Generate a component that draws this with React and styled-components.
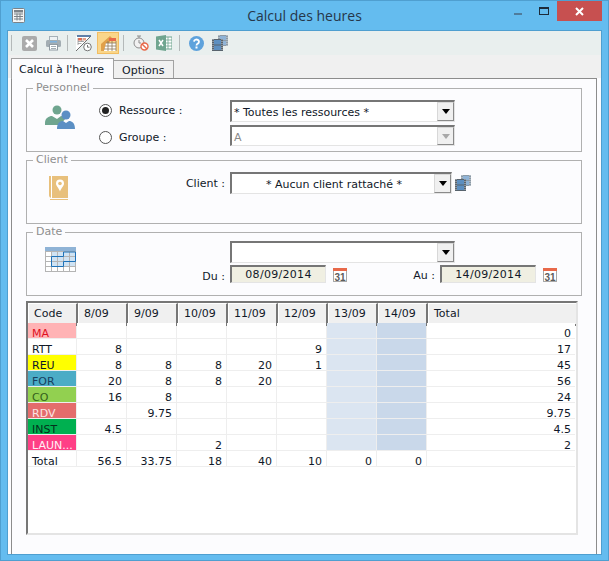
import React from "react";
import styled, { createGlobalStyle } from "styled-components";

const GlobalStyle = createGlobalStyle`
  html, body {
    margin: 0;
    padding: 0;
    background: #64bcef;
  }
  * {
    box-sizing: border-box;
  }
`;

const Frame = styled.div`
  width: 609px;
  height: 561px;
  display: flex;
  flex-direction: column;
  background: #64bcef;
  border: 1px solid #4f9fd0;
  font-family: "DejaVu Sans", sans-serif;
  font-size: 11px;
  color: #101828;
  overflow: hidden;
`;

const TitleBar = styled.div`
  height: 29px;
  flex: none;
  display: grid;
  grid-template-columns: 1fr auto 1fr;
  align-items: start;
`;

const AppIcon = styled.svg`
  display: block;
  margin: 7px 0 0 11px;
`;

const Title = styled.div`
  font-family: "Open Sans", sans-serif;
  font-size: 14px;
  line-height: 30px;
  color: #26374a;
`;

const WindowButtons = styled.div`
  display: flex;
  justify-content: flex-end;
  margin-right: 6px;
`;

const WindowButton = styled.div`
  width: ${(p) => p.$w}px;
  height: 20px;
  display: flex;
  align-items: center;
  justify-content: center;
  background: ${(p) => (p.$close ? "#c75050" : "transparent")};
`;

const ClientArea = styled.div`
  flex: 1;
  display: flex;
  flex-direction: column;
  margin: 0 6px 5px 6px;
  background: #fcfcfe;
  border: 1px solid #4f9fd0;
`;

const Toolbar = styled.div`
  height: 24px;
  flex: none;
  display: flex;
  align-items: center;
  padding-left: 3px;
  background: #e9efee;
`;

const Separator = styled.div`
  width: 1px;
  height: 16px;
  flex: none;
  background: #b4b9b9;
  margin: 0 ${(p) => p.$right ?? 9}px 0 ${(p) => p.$left ?? 8}px;
`;

const ToolButton = styled.div`
  width: ${(p) => p.$w ?? 16}px;
  height: 22px;
  margin-right: ${(p) => p.$gap ?? 0}px;
  flex: none;
  display: flex;
  align-items: center;
  justify-content: center;
  ${(p) => p.$active && "background: #fad68a; border: 1px solid #f2bd62;"}
`;

const TabStrip = styled.div`
  height: 23px;
  flex: none;
  display: flex;
  align-items: flex-end;
  padding-left: 3px;
  background: #f0f0f0;
`;

const Tab = styled.div`
  height: ${(p) => (p.$active ? 21 : 18)}px;
  width: ${(p) => (p.$active ? 103 : 60)}px;
  padding: ${(p) => (p.$active ? "4px 0 0 7px" : "3px 0 0 8px")};
  line-height: 14px;
  background: ${(p) => (p.$active ? "#fcfcfe" : "#f0f0f0")};
  border: 1px solid #a2a2a2;
  border-bottom: none;
  border-left-width: ${(p) => (p.$active ? 1 : 0)}px;
  margin-bottom: ${(p) => (p.$active ? -1 : 0)}px;
  position: relative;
  z-index: 1;
`;

const TabPanel = styled.div`
  flex: 1;
  margin: 0 4px 0 3px;
  padding: 2px 14px 0 14px;
  background: #fcfcfe;
  border: 1px solid #8c8c8c;
  border-bottom: none;
`;

const Group = styled.fieldset`
  margin: 0 0 1px;
  padding: 0;
  height: 71px;
  min-width: 0;
  border: 1px solid #b0b0b0;
`;

const GroupTitle = styled.legend`
  padding: 0 3px;
  margin-left: 6px;
  line-height: 14px;
  color: #8e8e8e;
`;

const GroupGrid = styled.div`
  display: grid;
  grid-template-columns: 54px 131px auto;
  grid-auto-rows: ${(p) => p.$row ?? 24}px;
  align-items: start;
  padding: ${(p) => p.$top ?? 0}px 0 0 18px;
`;

const GroupIcon = styled.svg`
  display: block;
  grid-row: span 2;
  margin-top: ${(p) => p.$top ?? 0}px;
  margin-left: ${(p) => p.$left ?? 0}px;
`;

const RadioLabel = styled.label`
  display: flex;
  align-items: center;
  gap: 7px;
  height: 22px;
  margin-top: ${(p) => p.$top ?? 0}px;
`;

const Radio = styled.span`
  width: 13px;
  height: 13px;
  border-radius: 50%;
  border: 1px solid #555;
  background: #fff;
  display: flex;
  align-items: center;
  justify-content: center;

  &::after {
    content: "";
    width: 7px;
    height: 7px;
    border-radius: 50%;
    background: ${(p) => (p.$checked ? "#222" : "transparent")};
  }
`;

const FieldLabel = styled.div`
  height: 22px;
  padding-right: 5px;
  display: flex;
  align-items: center;
  justify-content: flex-end;
`;

const ComboRow = styled.div`
  display: flex;
  align-items: flex-start;
  gap: 3px;
`;

const FilmSlot = styled.div`
  margin-top: 3px;
`;

const Combo = styled.div`
  width: ${(p) => p.$w ?? 225}px;
  height: ${(p) => p.$h ?? 22}px;
  display: flex;
  align-items: center;
  background: #fff;
  border: 1px solid #e4e4e4;
  border-top: 2px solid #767676;
  border-left: 2px solid #767676;
  color: ${(p) => (p.$disabled ? "#8a8a8a" : "inherit")};
`;

const ComboText = styled.div`
  flex: 1;
  padding: 2px 0 0 2px;
  text-align: ${(p) => (p.$center ? "center" : "left")};
`;

const ComboButton = styled.div`
  width: 17px;
  height: 100%;
  background: #f0f0f0;
  border: 1px solid #d8d8d8;
  border-right-color: #8a8a8a;
  border-bottom-color: #8a8a8a;
  display: flex;
  align-items: center;
  justify-content: center;

  &::after {
    content: "";
    border: 4px solid transparent;
    border-bottom: none;
    border-top: 5px solid ${(p) => (p.$disabled ? "#a8a8a8" : "#000")};
  }
`;

const DateRow = styled.div`
  display: flex;
  align-items: flex-start;
`;

const DateField = styled.div`
  width: 96px;
  height: 18px;
  background: #f0efe2;
  border: 1px solid #e4e4e4;
  border-top: 2px solid #767676;
  border-left: 2px solid #767676;
  text-align: center;
  line-height: 15px;
  letter-spacing: 0.3px;
`;

const CalendarIcon = styled.svg`
  display: block;
  margin: 3px 0 0 7px;
  flex: none;
`;

const CalendarDay = styled.text`
  font-family: "Liberation Sans", sans-serif;
  font-size: 10px;
  font-weight: 700;
  fill: #5c5c5c;
`;

const AuLabel = styled.div`
  width: 93px;
  height: 22px;
  padding: 1px 5px 0 0;
  text-align: right;
  line-height: 22px;
  margin-top: -1px;
`;

const Grid = styled.div`
  width: 552px;
  height: 234px;
  margin-top: 5px;
  background: #fff;
  border: 2px solid #e4e4e4;
  border-top-color: #767676;
  border-left-color: #767676;
  overflow: hidden;
`;

const HeadRow = styled.div`
  display: grid;
  grid-template-columns: repeat(8, 50px) 1fr;
  height: 20px;
`;

const HeadCell = styled.div`
  background: #f0f0f0;
  padding-left: 5px;
  line-height: 20px;
  border-top: 1px solid #fff;
  border-left: 1px solid #fff;
  border-right: 2px solid #767676;
  border-bottom: 2px solid #767676;
  &:last-child {
    border-right: none;
  }
`;

const DataRow = styled.div`
  display: grid;
  grid-template-columns: 48px repeat(7, 49px) 1fr;
  grid-template-rows: 15px;
  column-gap: 1px;
  height: 16px;
  margin-right: 1px;
  padding-bottom: 1px;
  background: #eeeeee;
`;

const Cell = styled.div`
  background: ${(p) => p.$bg ?? "#fff"};
  color: ${(p) => p.$color ?? "inherit"};
  text-align: ${(p) => (p.$code ? "left" : "right")};
  padding: 3px 4px 0 ${(p) => (p.$code ? 4 : 0)}px;
  line-height: 15px;
  white-space: nowrap;
`;

const ROWS = [
  { code: "MA", bg: "#ffb3b5", color: "#e0101f", v: ["", "", "", "", "", "0"] },
  { code: "RTT", v: ["8", "", "", "", "9", "17"] },
  { code: "REU", bg: "#ffff00", v: ["8", "8", "8", "20", "1", "45"] },
  { code: "FOR", bg: "#4bacc6", color: "#17405f", v: ["20", "8", "8", "20", "", "56"] },
  { code: "CO", bg: "#92d050", color: "#35601c", v: ["16", "8", "", "", "", "24"] },
  { code: "RDV", bg: "#e46c6c", color: "#fbe4e4", v: ["", "9.75", "", "", "", "9.75"] },
  { code: "INST", bg: "#00b050", color: "#04301c", v: ["4.5", "", "", "", "", "4.5"] },
  { code: "LAUN...", bg: "#ff3f86", color: "#fff0f5", v: ["", "", "2", "", "", "2"] },
];

const HEADERS = ["Code", "8/09", "9/09", "10/09", "11/09", "12/09", "13/09", "14/09", "Total"];
const TOTALS = ["56.5", "33.75", "18", "40", "10", "0", "0", ""];

const Calendar = () => (
  <CalendarIcon width="14" height="14" viewBox="0 0 14 14">
    <rect x="0.5" y="0.5" width="13" height="13" fill="#fff" stroke="#a8a8a8" />
    <rect width="14" height="3" fill="#e8694a" />
    <CalendarDay x="1.5" y="12.5">31</CalendarDay>
  </CalendarIcon>
);

const FilmIcon = () => (
  <svg width="16" height="16" viewBox="0 0 16 16">
    <rect x="6" y="0" width="10" height="11" fill="#8c9aa6" />
    <path d="M7 0v11M15 0v11" stroke="#d4dade" strokeWidth="1" strokeDasharray="1 1" />
    <rect x="8" y="1" width="6" height="4" fill="#8fb3d6" />
    <rect x="8" y="6" width="6" height="4" fill="#8fb3d6" />
    <rect x="0" y="4" width="11" height="12" fill="#58636d" />
    <path d="M1 4v12M10 4v12" stroke="#c4cace" strokeWidth="1" strokeDasharray="1 1" />
    <rect x="2" y="5" width="7" height="4.5" fill="#5d8fc0" />
    <rect x="2" y="10.5" width="7" height="4.5" fill="#5d8fc0" />
  </svg>
);

export default function App() {
  return (
    <>
      <GlobalStyle />
      <Frame>
        <TitleBar>
          <AppIcon width="13" height="15" viewBox="0 0 13 15">
            <rect x="0.5" y="0.5" width="12" height="14" rx="1" fill="#f4f6f6" stroke="#7b8288" />
            <rect x="2" y="2" width="9" height="2.5" fill="#7b8288" />
            <path d="M2 6h9M2 8.5h9M2 11h9M5 5.5v7M8 5.5v7" stroke="#7b8288" strokeWidth="1" />
          </AppIcon>
          <Title>Calcul des heures</Title>
          <WindowButtons>
            <WindowButton $w={26}>
              <svg width="9" height="9" viewBox="0 0 9 9">
                <rect y="6" width="8" height="2" fill="#4f7c9c" />
              </svg>
            </WindowButton>
            <WindowButton $w={26}>
              <svg width="10" height="8" viewBox="0 0 10 8">
                <rect x="0.5" y="1" width="9" height="6.5" fill="none" stroke="#1d2b3a" />
                <rect x="0" y="0" width="10" height="2" fill="#1d2b3a" />
              </svg>
            </WindowButton>
            <WindowButton $w={45} $close>
              <svg width="9" height="9" viewBox="0 0 9 9">
                <path d="M1 1l7 7M8 1l-7 7" stroke="#fff" strokeWidth="2" />
              </svg>
            </WindowButton>
          </WindowButtons>
        </TitleBar>

        <ClientArea>
          <Toolbar>
            <Separator $left={0} />
            <ToolButton $gap={8}>
              <svg width="15" height="15" viewBox="0 0 15 15">
                <rect width="15" height="15" rx="2" fill="#ababab" />
                <path d="M4 4l7 7M11 4l-7 7" stroke="#fff" strokeWidth="2.6" />
              </svg>
            </ToolButton>
            <ToolButton>
              <svg width="15" height="15" viewBox="0 0 15 15">
                <rect x="3.5" y="0.5" width="8" height="5" fill="#eef2f4" stroke="#a5b0b7" />
                <rect x="0" y="4" width="15" height="7" rx="1.5" fill="#a3adb3" />
                <rect x="3.5" y="8.5" width="8" height="5.5" fill="#fff" stroke="#8f9aa2" />
                <path d="M5 10.5h5M5 12.5h5" stroke="#a3adb3" />
                <rect x="4" y="5" width="7" height="1.5" fill="#7fb2dc" />
              </svg>
            </ToolButton>
            <Separator $left={6} $right={8} />
            <ToolButton $gap={5}>
              <svg width="16" height="17" viewBox="0 0 16 17">
                <path d="M0 1h15L0 16z" fill="#fff" />
                <path d="M1 1h14" stroke="#5f7fa8" strokeWidth="2" />
                <path d="M15 1L0 16" stroke="#6f6f6f" />
                <rect x="2" y="3" width="4" height="2.5" fill="#e8694a" />
                <rect x="7" y="3" width="3" height="2.5" fill="#e8a08a" />
                <path d="M2 6.5h6M2 8.5h3.5M2 3v7M6 3v4" stroke="#8d8d8d" strokeWidth="0.7" />
                <circle cx="11.5" cy="12" r="3.8" fill="#fff" stroke="#767676" />
                <path d="M11.5 10v2.2h2" fill="none" stroke="#767676" />
              </svg>
            </ToolButton>
            <ToolButton $active $w={22}>
              <svg width="17" height="17" viewBox="0 0 17 17">
                <path d="M1 16V9L10 1l2 2-8 13z" fill="#e0a04a" />
                <path d="M6 8h10v8H4z" fill="#fff" />
                <rect x="9" y="3" width="7" height="3" fill="#e8694a" />
                <path d="M6 8h10M5 11h11M4 14h12M8 6v10M12 6v10M16 6v10" stroke="#8d7a5a" strokeWidth="0.8" />
              </svg>
            </ToolButton>
            <Separator $left={4} />
            <ToolButton $gap={7}>
              <svg width="16" height="16" viewBox="0 0 16 16">
                <path d="M4 1h4M6 1v2" stroke="#8d8d8d" />
                <circle cx="6" cy="8" r="5" fill="#f1f1f1" stroke="#8d8d8d" />
                <path d="M6 5v3h2" fill="none" stroke="#8d8d8d" />
                <circle cx="11.5" cy="11.5" r="3.5" fill="#fff" stroke="#e8694a" strokeWidth="1.4" />
                <path d="M9 9l5 5" stroke="#e8694a" strokeWidth="1.4" />
              </svg>
            </ToolButton>
            <ToolButton>
              <svg width="16" height="16" viewBox="0 0 16 16">
                <rect x="8" y="2" width="8" height="12" fill="#fff" stroke="#6fa58f" />
                <path d="M8 5h8M8 8h8M8 11h8M12 2v12" stroke="#6fa58f" strokeWidth="0.8" />
                <path d="M0 1.5L10 0v16L0 14.5z" fill="#6fa58f" />
                <path d="M3 5l4 6M7 5l-4 6" stroke="#fff" strokeWidth="1.5" />
              </svg>
            </ToolButton>
            <Separator $left={7} $right={8} />
            <ToolButton $gap={8}>
              <svg width="15" height="15" viewBox="0 0 15 15">
                <circle cx="7.5" cy="7.5" r="7.5" fill="#5ea2dc" />
                <path d="M5 5.6a2.5 2.2 0 1 1 3.8 2c-.9.6-1.3 1-1.3 1.9" fill="none" stroke="#fff" strokeWidth="1.8" />
                <rect x="6.5" y="10.5" width="2" height="2" fill="#fff" />
              </svg>
            </ToolButton>
            <ToolButton>
              <FilmIcon />
            </ToolButton>
          </Toolbar>

          <TabStrip>
            <Tab $active>Calcul à l'heure</Tab>
            <Tab>Options</Tab>
          </TabStrip>

          <TabPanel>
            <Group>
              <GroupTitle>Personnel</GroupTitle>
              <GroupGrid $top={5} $row={25}>
                <GroupIcon width="30" height="24" viewBox="0 0 30 24" $top={5}>
                  <circle cx="12" cy="5" r="4.5" fill="#6fa58f" />
                  <path d="M0 18c0-5 4-7 7-7l5 3 4-3c2 0 4 1 5 2l-6 7H0z" fill="#6fa58f" />
                  <circle cx="21" cy="10" r="4.5" fill="#5b8fc4" />
                  <path d="M12 24c0-6 3-8 6-8l3 2 3-2c3 0 6 2 6 8z" fill="#5b8fc4" />
                </GroupIcon>
                <RadioLabel $top={-1}>
                  <Radio $checked />
                  Ressource :
                </RadioLabel>
                <Combo>
                  <ComboText>* Toutes les ressources *</ComboText>
                  <ComboButton />
                </Combo>
                <RadioLabel $top={1}>
                  <Radio />
                  Groupe :
                </RadioLabel>
                <Combo $disabled $h={21}>
                  <ComboText>A</ComboText>
                  <ComboButton $disabled />
                </Combo>
              </GroupGrid>
            </Group>

            <Group>
              <GroupTitle>Client</GroupTitle>
              <GroupGrid $top={5}>
                <GroupIcon width="19" height="24" viewBox="0 0 19 24" $left={4} $top={4}>
                  <path d="M0 0h19v22H3a3 3 0 0 1-3-3z" fill="#e8c07c" />
                  <path d="M2.5 0v22" stroke="#fff" />
                  <path d="M1 23.5h18" stroke="#e8c07c" />
                  <path d="M11 3.5a4 4 0 0 0-4 4c0 2.5 2.5 4 4 8 1.5-4 4-5.5 4-8a4 4 0 0 0-4-4z" fill="#fff" />
                  <circle cx="11" cy="7.5" r="1.8" fill="#e8c07c" />
                </GroupIcon>
                <FieldLabel>Client :</FieldLabel>
                <ComboRow>
                  <Combo $w={222}>
                    <ComboText $center>* Aucun client rattaché *</ComboText>
                    <ComboButton />
                  </Combo>
                  <FilmSlot>
                    <FilmIcon />
                  </FilmSlot>
                </ComboRow>
              </GroupGrid>
            </Group>

            <Group>
              <GroupTitle>Date</GroupTitle>
              <GroupGrid $top={2}>
                <GroupIcon width="31" height="25" viewBox="0 0 31 25" $top={6}>
                  <rect width="31" height="25" fill="#fff" />
                  <rect width="31" height="4" fill="#8fb3d6" />
                  <rect x="6" y="5" width="25" height="15" fill="#cfe3f4" />
                  <path d="M0 4.5h31M0 9.5h31M0 14.5h31M0 19.5h31M0 24.5h31M.5 4v21M6.5 4v21M12.5 4v21M18.5 4v21M24.5 4v21M30.5 4v21" stroke="#b4b4b4" />
                  <path d="M18.5 5v4.5H6.5v10h12v-5h12V5z" fill="none" stroke="#1f72b8" />
                </GroupIcon>
                <span />
                <Combo>
                  <ComboText />
                  <ComboButton />
                </Combo>
                <FieldLabel>Du :</FieldLabel>
                <DateRow>
                  <DateField>08/09/2014</DateField>
                  <Calendar />
                  <AuLabel>Au :</AuLabel>
                  <DateField>14/09/2014</DateField>
                  <Calendar />
                </DateRow>
              </GroupGrid>
            </Group>

            <Grid>
              <HeadRow>
                {HEADERS.map((h) => (
                  <HeadCell key={h}>{h}</HeadCell>
                ))}
              </HeadRow>
              {ROWS.map((r) => (
                <DataRow key={r.code}>
                  <Cell $code $bg={r.bg} $color={r.color}>
                    {r.code}
                  </Cell>
                  {r.v.slice(0, 5).map((val, i) => (
                    <Cell key={i}>{val}</Cell>
                  ))}
                  <Cell $bg="#dbe5f1" />
                  <Cell $bg="#c9d8ea" />
                  <Cell>{r.v[5]}</Cell>
                </DataRow>
              ))}
              <DataRow>
                <Cell $code>Total</Cell>
                {TOTALS.map((t, i) => (
                  <Cell key={i}>{t}</Cell>
                ))}
              </DataRow>
            </Grid>
          </TabPanel>
        </ClientArea>
      </Frame>
    </>
  );
}
